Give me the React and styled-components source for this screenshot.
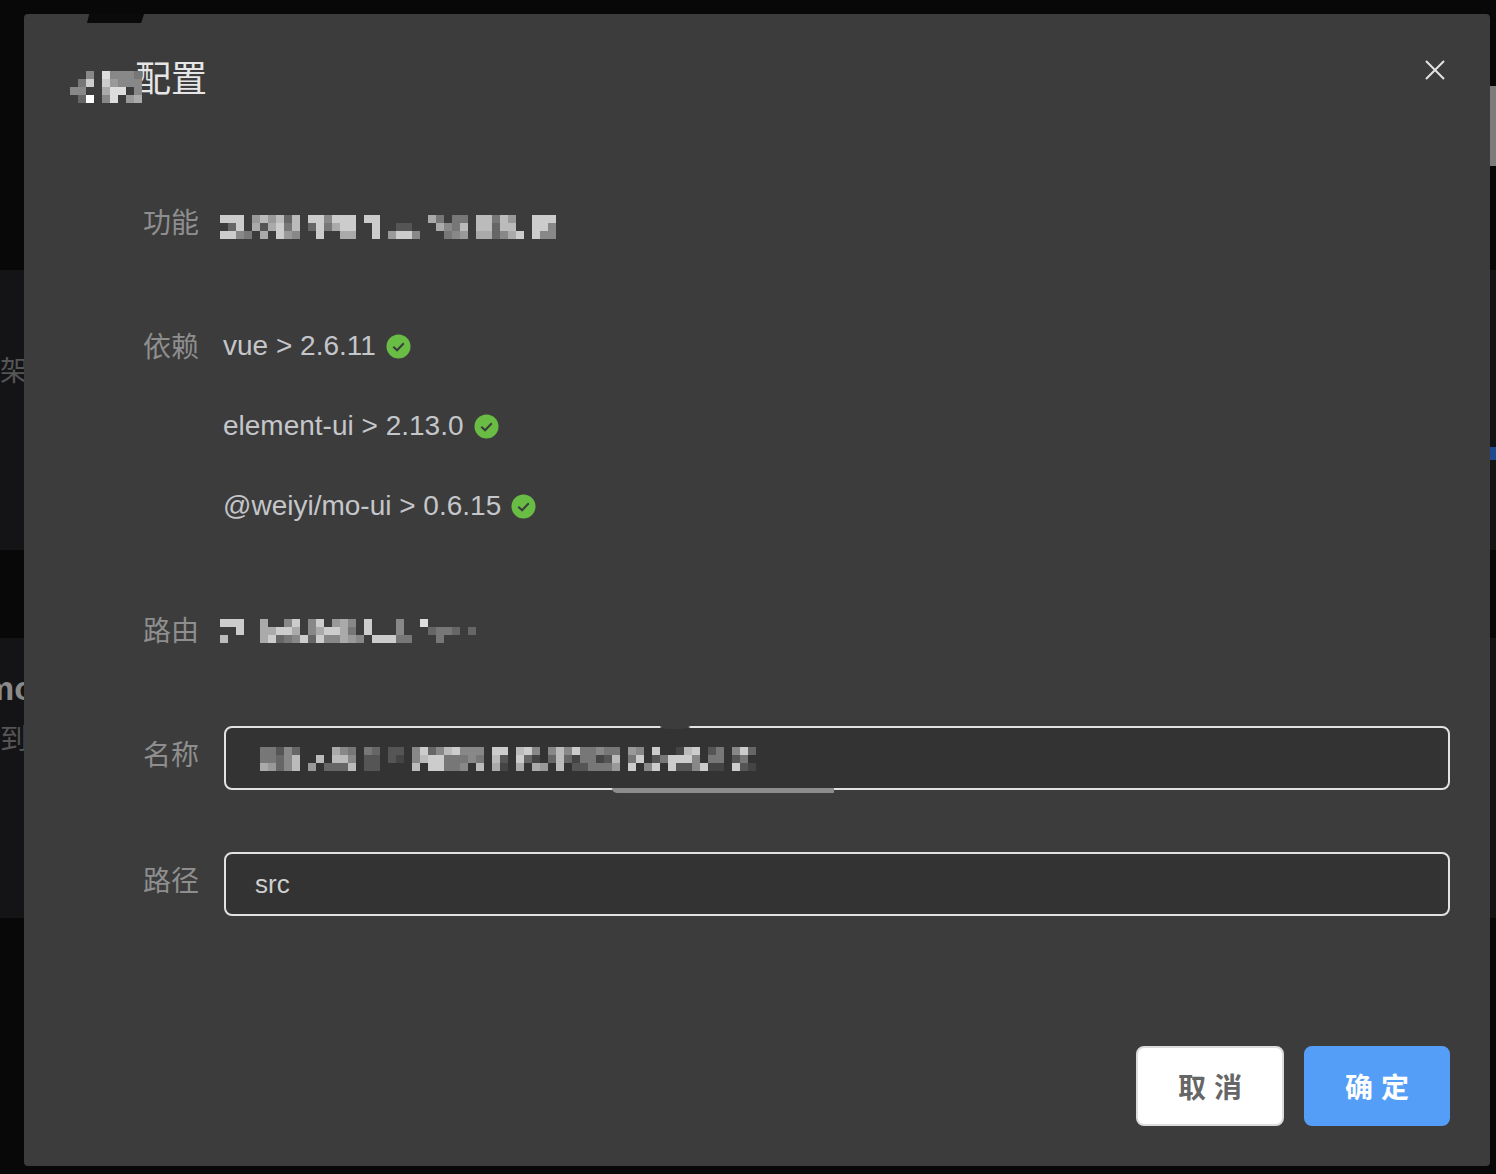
import React from 'react';
import styled, { createGlobalStyle } from 'styled-components';

const GlobalStyle = createGlobalStyle`
  html, body {
    margin: 0;
    padding: 0;
    background: #080808;
  }
  body {
    font-family: "Liberation Sans", "Noto Sans CJK SC", sans-serif;
  }
`;

const Page = styled.div`
  position: relative;
  width: 1496px;
  height: 1174px;
  overflow: hidden;
  background: #080808;
  padding-top: 270px;
  box-sizing: border-box;
  display: flex;
  flex-direction: column;
  gap: 88px;
`;

const BackCard = styled.div`
  position: relative;
  height: 280px;
  background: #141416;
  box-sizing: border-box;
  padding-top: ${props => props.$top}px;
`;

const BackTitle = styled.div`
  font-size: 34px;
  line-height: 40px;
  font-weight: 700;
  color: #8a8a8a;
  margin-left: -16px;
  margin-bottom: 12px;
`;

const BackText = styled.div`
  font-size: 28px;
  line-height: 40px;
  color: #555;
`;

const ScrollThumb = styled.div`
  position: absolute;
  right: 0;
  top: 86px;
  width: 6px;
  height: 80px;
  background: #7c7c7c;
`;

const BlueMark = styled.div`
  position: absolute;
  right: 0;
  top: 177px;
  width: 6px;
  height: 13px;
  background: #1f4a90;
`;

const Modal = styled.div`
  position: absolute;
  left: 24px;
  top: 14px;
  width: 1466px;
  height: 1152px;
  background: #3c3c3c;
  border-radius: 4px;
  display: flex;
  flex-direction: column;
  box-sizing: border-box;

  &::before {
    content: "";
    position: absolute;
    left: 63px;
    top: 0;
    width: 57px;
    height: 9px;
    background: #0a0a0a;
    clip-path: polygon(4% 0, 100% 0, 95% 100%, 0 100%);
  }
`;

const Header = styled.div`
  display: flex;
  justify-content: space-between;
  align-items: flex-start;
  height: 168px;
  box-sizing: border-box;
  padding: 43px 44px 0 46px;
`;

const Title = styled.div`
  display: flex;
  align-items: center;
  font-size: 36px;
  line-height: 40px;
  color: #e6e6e6;
`;

const TitleMosaic = styled.div`
  display: flex;
  margin-top: 14px;
  margin-right: -7px;
`;

const CloseButton = styled.button`
  display: flex;
  padding: 0;
  margin-top: 2px;
  background: none;
  border: 0;
  color: #e4e4e4;
  cursor: pointer;
`;

const Form = styled.div`
  padding-left: 119px;
  padding-right: 40px;
`;

const Row = styled.div`
  display: flex;
  margin-bottom: ${props => props.$gap}px;
`;

const Label = styled.div`
  flex: 0 0 81px;
  height: 80px;
  font-size: 28px;
  line-height: 84px;
  color: #8e8e8e;
`;

const Control = styled.div`
  flex: 1;
  min-width: 0;
`;

const ValueLine = styled.div`
  display: flex;
  align-items: center;
  gap: 10px;
  height: 80px;
  margin-left: -1px;
  font-size: 28px;
  line-height: 82px;
  color: #c4c6ca;
`;

const MosaicLine = styled.div`
  display: flex;
  height: 80px;
  align-items: center;
  margin-left: -4px;
  padding-top: ${props => props.$offset}px;
  box-sizing: border-box;
`;

const InputBox = styled.div`
  position: relative;
  margin-top: 12px;

  &::before {
    content: ${props => (props.$streak ? '""' : 'none')};
    position: absolute;
    left: 436px;
    top: -1px;
    width: 30px;
    height: 4px;
    border-radius: 50%;
    background: #3c3c3c;
  }

  &::after {
    content: ${props => (props.$streak ? '""' : 'none')};
    position: absolute;
    left: 388px;
    top: 62px;
    width: 222px;
    height: 5px;
    border-radius: 0 0 4px 30px;
    background: #8c8c8c;
  }
`;

const TextInput = styled.input`
  display: block;
  width: 100%;
  height: 64px;
  box-sizing: border-box;
  padding: 0 29px;
  background: #333;
  border: 2px solid #e2e2e2;
  border-radius: 8px;
  outline: none;
  font-family: inherit;
  font-size: 26px;
  color: #cfcfcf;
`;

const InputMosaic = styled.div`
  position: absolute;
  left: 36px;
  top: 21px;
  display: flex;
`;

const Footer = styled.div`
  margin-top: auto;
  display: flex;
  justify-content: flex-end;
  gap: 20px;
  padding: 0 40px 40px 0;
`;

const Button = styled.button`
  width: ${props => props.$width}px;
  height: 80px;
  box-sizing: border-box;
  border-radius: 8px;
  border: 2px solid ${props => (props.$primary ? '#559ef8' : '#dcdcdc')};
  background: ${props => (props.$primary ? '#559ef8' : '#fff')};
  color: ${props => (props.$primary ? '#fff' : '#666')};
  font-family: inherit;
  font-size: 28px;
  font-weight: 700;
  padding: 0;
  cursor: pointer;
`;

const MosaicSvg = styled.svg`
  display: block;
  filter: blur(0.4px);
`;

// pixelated (redacted) text in the reference, one hex digit per cell = grey level
const titleCells = [
  '..8.d8887',
  '.7c.c9888',
  '88..add.8',
  '.6f.8d.9a',
];

const featureCells = [
  'ccc.9b9b6b.cc8ccc.cc......a7.77.bb7b9..ccc',
  '.6c.a5ac7b.6c7acc..c..55...a87b.bb6bb..cc8',
  'cc87.a.c98..c..aa..c.9cc8...789.aa68ac.c88',
];

const routeCells = [
  'ccc..a..8c.8c.9a8.c...8..d......',
  '..c..aacca.8acca7.c...8...6776.6',
  'b....ac678c6c88a98.ccc77...7....',
];

const nameCells = [
  '77586....a87.76.55.8c68bc888.cc.bc8.8b8c77877.98.c..4bc.57.8c6',
  '7768b..b.bb8.55.54.8bcc77787.b5.c64.6b647745b.7c.57ccc8.77.57.',
  'a968b.9.666b.55....b.cc778.b.a4.a.a9.b.557779.c.8c.c558c44.c54',
];

const Mosaic = ({ cells }) => {
  const width = Math.max(...cells.map(row => row.length)) * 8;
  const rects = [];
  cells.forEach((row, y) => {
    row.split('').forEach((cell, x) => {
      if (cell === '.') return;
      const level = parseInt(cell, 16) * 17;
      rects.push(
        <rect
          key={`${x}-${y}`}
          x={x * 8}
          y={y * 8}
          width="8"
          height="8"
          fill={`rgb(${level},${level},${level})`}
        />,
      );
    });
  });
  return (
    <MosaicSvg width={width} height={cells.length * 8} shapeRendering="crispEdges">
      {rects}
    </MosaicSvg>
  );
};

const CheckBadge = () => (
  <svg width="25" height="25" viewBox="0 0 26 26">
    <circle cx="13" cy="13" r="12.5" fill="#69bd45" />
    <path d="M7.6 13.2l3.9 3.7 7-7.2" fill="none" stroke="#3c3c3c" strokeWidth="2.1" />
  </svg>
);

const CloseIcon = () => (
  <svg width="22" height="22" viewBox="0 0 22 22">
    <path d="M2 2l18 18M20 2L2 20" fill="none" stroke="currentColor" strokeWidth="2" />
  </svg>
);

const dependencies = ['vue > 2.6.11', 'element-ui > 2.13.0', '@weiyi/mo-ui > 0.6.15'];

export default function App() {
  return (
    <Page>
      <GlobalStyle />
      <BackCard $top={82}>
        <BackText>架</BackText>
        <BlueMark />
      </BackCard>
      <BackCard $top={30}>
        <BackTitle>mo</BackTitle>
        <BackText>到</BackText>
      </BackCard>
      <ScrollThumb />
      <Modal>
        <Header>
          <Title>
            <TitleMosaic>
              <Mosaic cells={titleCells} />
            </TitleMosaic>
            配置
          </Title>
          <CloseButton aria-label="关闭">
            <CloseIcon />
          </CloseButton>
        </Header>
        <Form>
          <Row $gap={44}>
            <Label>功能</Label>
            <Control>
              <MosaicLine $offset={10}>
                <Mosaic cells={featureCells} />
              </MosaicLine>
            </Control>
          </Row>
          <Row $gap={44}>
            <Label>依赖</Label>
            <Control>
              {dependencies.map(dep => (
                <ValueLine key={dep}>
                  {dep}
                  <CheckBadge />
                </ValueLine>
              ))}
            </Control>
          </Row>
          <Row $gap={44}>
            <Label>路由</Label>
            <Control>
              <MosaicLine $offset={2}>
                <Mosaic cells={routeCells} />
              </MosaicLine>
            </Control>
          </Row>
          <Row $gap={46}>
            <Label>名称</Label>
            <Control>
              <InputBox $streak>
                <TextInput defaultValue="" />
                <InputMosaic>
                  <Mosaic cells={nameCells} />
                </InputMosaic>
              </InputBox>
            </Control>
          </Row>
          <Row $gap={0}>
            <Label>路径</Label>
            <Control>
              <InputBox>
                <TextInput defaultValue="src" />
              </InputBox>
            </Control>
          </Row>
        </Form>
        <Footer>
          <Button $width={148}>取 消</Button>
          <Button $width={146} $primary>确 定</Button>
        </Footer>
      </Modal>
    </Page>
  );
}
